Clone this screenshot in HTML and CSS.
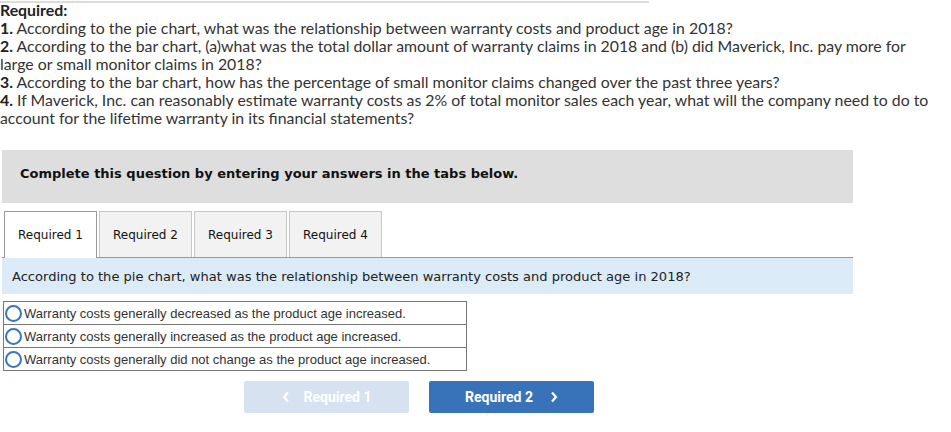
FILE: index.html
```html
<!DOCTYPE html>
<html>
<head>
<meta charset="utf-8">
<link rel="stylesheet" href="styles.css">
</head>
<body>
<div class="topline"></div>
<div class="required">
  <div class="req-title">Required:</div>
  <p><b>1.</b> According to the pie chart, what was the relationship between warranty costs and product age in 2018?</p>
  <p><b>2.</b> According to the bar chart, (a)what was the total dollar amount of warranty claims in 2018 and (b) did Maverick, Inc. pay more for large or small monitor claims in 2018?</p>
  <p><b>3.</b> According to the bar chart, how has the percentage of small monitor claims changed over the past three years?</p>
  <p><b>4.</b> If Maverick, Inc. can reasonably estimate warranty costs as 2% of total monitor sales each year, what will the company need to do to account for the lifetime warranty in its financial statements?</p>
</div>
<div class="panel">
  <div class="instructions">Complete this question by entering your answers in the tabs below.</div>
  <div class="tabs">
    <div class="tab active">Required 1</div>
    <div class="tab">Required 2</div>
    <div class="tab">Required 3</div>
    <div class="tab">Required 4</div>
  </div>
  <div class="question">According to the pie chart, what was the relationship between warranty costs and product age in 2018?</div>
  <div class="options">
    <div class="option"><span class="radio"></span>Warranty costs generally decreased as the product age increased.</div>
    <div class="option"><span class="radio"></span>Warranty costs generally increased as the product age increased.</div>
    <div class="option"><span class="radio"></span>Warranty costs generally did not change as the product age increased.</div>
  </div>
  <div class="nav">
    <button class="btn prev"><svg width="8" height="12" viewBox="0 0 8 12"><path d="M6 1.5 L2 6 L6 10.5" fill="none" stroke="#fff" stroke-width="2.2"/></svg><span>Required 1</span></button>
    <button class="btn next"><span>Required 2</span><svg width="8" height="12" viewBox="0 0 8 12"><path d="M2 1.5 L6 6 L2 10.5" fill="none" stroke="#fff" stroke-width="2.2"/></svg></button>
  </div>
</div>
</body>
</html>
```
FILE: styles.css
```css
body {
  margin: 0;
  background: #fff;
  color: #222;
}
.topline {
  width: 649px;
  height: 2px;
  margin-top: 1px;
  background: #dcdcdc;
}
.required {
  font-family: Lato, "Open Sans", sans-serif;
  font-size: 15.85px;
  line-height: 18px;
  color: #333;
  width: 942px;
  margin-top: -2px;
}
.req-title {
  font-weight: bold;
  color: #222;
}
.required p {
  margin: 0;
}
.required b {
  color: #222;
}
.panel {
  margin-left: 2px;
  width: 851px;
  margin-top: 23px;
}
.instructions {
  background: #dedede;
  height: 53px;
  box-sizing: border-box;
  padding-bottom: 7px;
  display: flex;
  align-items: center;
  padding-left: 18px;
  font-family: "DejaVu Sans", Verdana, sans-serif;
  font-weight: bold;
  font-size: 13px;
  color: #111;
}
.tabs {
  display: flex;
  gap: 2px;
  margin-top: 8px;
  padding-left: 2px;
  border-bottom: 1px solid #999;
}
.tab {
  width: 93px;
  height: 46px;
  box-sizing: border-box;
  border: 1px solid #c6c6c6;
  border-bottom: none;
  background: #f2f2f2;
  font-family: "DejaVu Sans", Verdana, sans-serif;
  font-size: 12px;
  color: #111;
  display: flex;
  align-items: center;
  justify-content: center;
}
.tab.active {
  background: #fff;
  border-color: #999;
  height: 47px;
  margin-bottom: -1px;
}
.question {
  background: #dbebf8;
  height: 36px;
  display: flex;
  align-items: center;
  padding-left: 10px;
  font-family: "DejaVu Sans", Verdana, sans-serif;
  font-size: 13.05px;
  color: #222;
}
.options {
  margin-top: 7px;
  margin-left: 1px;
  width: 464px;
  border: 1px solid #777;
  box-sizing: border-box;
}
.option {
  height: 22px;
  display: flex;
  align-items: center;
  font-family: "Liberation Sans", Arial, sans-serif;
  font-size: 13px;
  color: #333;
  padding-left: 1px;
}
.option + .option {
  border-top: 1px solid #777;
}
.radio {
  width: 17px;
  height: 17px;
  box-sizing: border-box;
  border: 2px solid #3a76bb;
  border-radius: 50%;
  margin-right: 2px;
  flex: none;
}
.nav {
  display: flex;
  gap: 20px;
  margin-top: 10px;
  padding-left: 242px;
}
.btn {
  width: 165px;
  height: 32px;
  border: none;
  border-radius: 2px;
  font-family: Roboto, "Liberation Sans", sans-serif;
  font-weight: bold;
  font-size: 14px;
  color: #fff;
  display: flex;
  align-items: center;
  justify-content: center;
  gap: 14px;
  padding: 0;
}
.prev {
  background: #d6e2f0;
}
.next {
  background: #3873b9;
  gap: 17px;
}
```
